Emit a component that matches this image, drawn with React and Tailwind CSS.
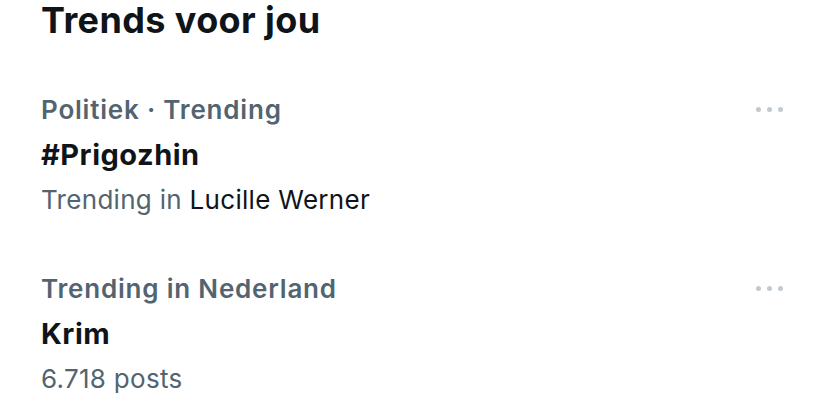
const trends = [
  { meta: "Politiek · Trending", title: "#Prigozhin", sub: ["Trending in ", "Lucille Werner"] },
  { meta: "Trending in Nederland", title: "Krim", sub: ["6.718 posts", null] },
];

function Dots() {
  return (
    <div className="flex gap-[6px] pt-[19px]">
      <span className="w-[5px] h-[5px] rounded-full bg-[#c2c9cf]" />
      <span className="w-[5px] h-[5px] rounded-full bg-[#c2c9cf]" />
      <span className="w-[5px] h-[5px] rounded-full bg-[#c2c9cf]" />
    </div>
  );
}

export default function App() {
  return (
    <div className="w-[828px] h-[419px] bg-white overflow-hidden" style={{ fontFamily: "Inter, 'Noto Sans', sans-serif" }}>
      <div className="pl-[41px] pr-[45px]">
        <h2 className="text-[36px] leading-[40px] font-bold text-[#0f1419] tracking-[0.4px]">Trends voor jou</h2>
        <div className="flex flex-col gap-[45px] mt-[48px]">
          {trends.map((t, i) => (
            <div key={i} className="flex justify-between items-start">
              <div className="flex flex-col">
                <div className="text-[26px] leading-[44px] font-semibold text-[#536471] tracking-[0.8px]">{t.meta}</div>
                <div className="text-[29px] leading-[45px] font-bold text-[#0f1419] tracking-[0.5px]">{t.title}</div>
                <div className="text-[26px] leading-[45px] text-[#536471] tracking-[0.3px]">
                  {t.sub[0]}
                  {t.sub[1] && <span className="text-[#0f1419]">{t.sub[1]}</span>}
                </div>
              </div>
              <Dots />
            </div>
          ))}
        </div>
      </div>
    </div>
  );
}
